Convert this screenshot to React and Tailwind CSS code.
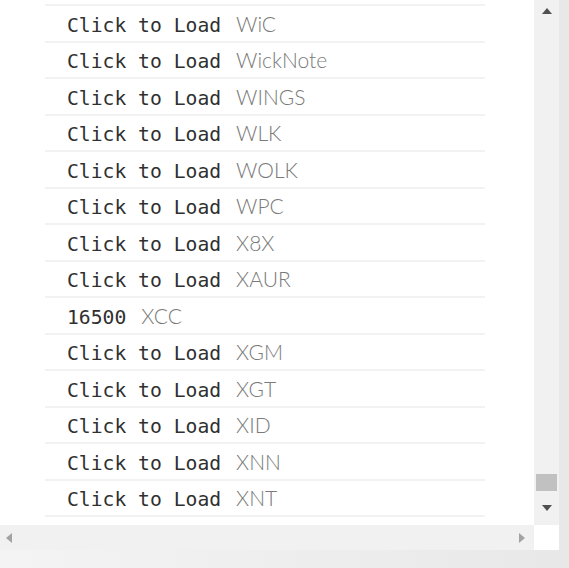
import React from 'react';

const rows = [
    { value: null, name: 'WiC' },
    { value: null, name: 'WickNote' },
    { value: null, name: 'WINGS' },
    { value: null, name: 'WLK' },
    { value: null, name: 'WOLK' },
    { value: null, name: 'WPC' },
    { value: null, name: 'X8X' },
    { value: null, name: 'XAUR' },
    { value: '16500', name: 'XCC' },
    { value: null, name: 'XGM' },
    { value: null, name: 'XGT' },
    { value: null, name: 'XID' },
    { value: null, name: 'XNN' },
    { value: null, name: 'XNT' },
];

const Row = ({ value, name }) => (
    <div className="h-[36.5px] border-b-2 border-[#f2f2f2] flex items-center pl-[22px] pt-[2px]">
        <div className="flex items-baseline leading-none">
            <span className="font-['DejaVu_Sans_Mono',monospace] font-normal text-[19.7px] text-[#303030]">
                {value || 'Click to Load'}
            </span>
            <span className="ml-[15px] font-['Lato',sans-serif] font-light text-[21px] text-[#7a7a7a]">
                {name}
            </span>
        </div>
    </div>
);

const App = () => {
    return (
        <div className="w-[569px] h-[568px] bg-[#ebebeb] bg-gradient-to-r from-[#f4f4f4] to-[#e8e8e8] overflow-hidden">
            <div className="w-[559px] h-[550px] bg-white flex flex-col">
                <div className="flex h-[525px]">
                    {/* list viewport */}
                    <div className="w-[534px] h-full overflow-hidden">
                        <div className="w-[440px] ml-[45px]">
                            <div className="h-[6px] border-b-2 border-[#f2f2f2]"></div>
                            {rows.map((row) => (
                                <Row key={row.name} {...row} />
                            ))}
                        </div>
                    </div>
                    {/* vertical scrollbar */}
                    <div className="w-[25px] h-full bg-[#f1f1f1] flex flex-col items-center">
                        <div className="h-[22px] flex items-center justify-center">
                            <svg width="10" height="6" viewBox="0 0 10 6">
                                <path d="M0 6 L5 0 L10 6 Z" fill="#505050" />
                            </svg>
                        </div>
                        <div className="flex-1 w-full flex flex-col justify-end px-[2px]">
                            <div className="h-[17px] bg-[#c1c1c1]"></div>
                        </div>
                        <div className="h-[34px] flex items-center justify-center">
                            <svg width="10" height="6" viewBox="0 0 10 6">
                                <path d="M0 0 L5 6 L10 0 Z" fill="#505050" />
                            </svg>
                        </div>
                    </div>
                </div>
                {/* horizontal scrollbar */}
                <div className="flex h-[25px]">
                    <div className="w-[534px] h-full bg-[#f1f1f1] flex items-center justify-between px-[6px]">
                        <svg width="6" height="10" viewBox="0 0 6 10">
                            <path d="M6 0 L0 5 L6 10 Z" fill="#a3a3a3" />
                        </svg>
                        <svg width="6" height="10" viewBox="0 0 6 10" className="mr-[3px]">
                            <path d="M0 0 L6 5 L0 10 Z" fill="#a3a3a3" />
                        </svg>
                    </div>
                    <div className="w-[25px] h-full bg-white"></div>
                </div>
            </div>
        </div>
    );
};

export default App;
